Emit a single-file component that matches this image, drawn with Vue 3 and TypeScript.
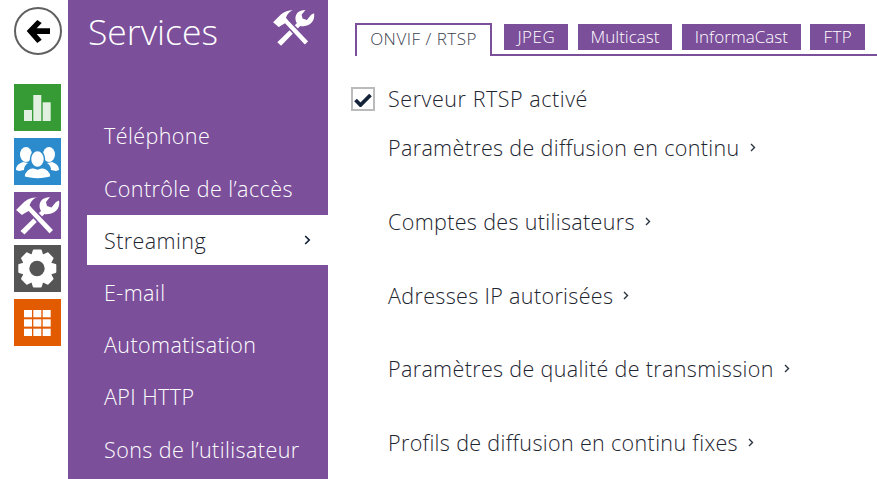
<script setup lang="ts">
const rail = [
  { key: 'stats', color: '#369a35' },
  { key: 'users', color: '#2c8bcc' },
  { key: 'tools', color: '#7c4f9b' },
  { key: 'gear', color: '#555555' },
  { key: 'grid', color: '#e25b00' }
]
const menu = ['Téléphone', 'Contrôle de l’accès', 'Streaming', 'E-mail', 'Automatisation', 'API HTTP', 'Sons de l’utilisateur']
const tabs = [
  { label: 'JPEG', caps: true },
  { label: 'Multicast', caps: false },
  { label: 'InformaCast', caps: false },
  { label: 'FTP', caps: true }
]
const links = [
  'Paramètres de diffusion en continu',
  'Comptes des utilisateurs',
  'Adresses IP autorisées',
  'Paramètres de qualité de transmission',
  'Profils de diffusion en continu fixes'
]
const wrenchPath = 'M6.5 39 L27 19 C24 14 26 8 30 6.5 C32 5.5 34 5 36 5 L32 10 L33 14 L37.5 15.5 L42 10 L45 8.5 C46 13 44 18 40.5 20 C37 22 33 22.5 30.5 22 L10.5 42.5 Z'
const hammerPath = 'M1 18 L10 9 C14 6 20 4 25 5 C20 7 17.5 10 16.5 13 L18.5 15.5 L40 38 L35.5 42.5 L14.5 20 L11 22 L8 24 Z'

// eight teeth, rounded by the stroke on the path
const gearPath = (() => {
  const pts: string[] = []
  for (let i = 0; i < 8; i++) {
    const a = (i * Math.PI) / 4
    for (const [r, off] of [[14.5, -0.34], [18.3, -0.19], [18.3, 0.19], [14.5, 0.34]]) {
      pts.push(`${(23.3 + r * Math.sin(a + off)).toFixed(1)} ${(23.5 - r * Math.cos(a + off)).toFixed(1)}`)
    }
  }
  return 'M' + pts.join(' L') + ' Z'
})()
</script>

<template>
  <div class="page">
    <div class="rail">
      <button class="back">
        <svg width="25" height="25" viewBox="0 0 25 25">
          <path d="M0.7 12 L11.3 1 L15.7 4 L10.7 9.3 H24 V15 H10.7 L15.7 20.7 L11.3 24 Z" fill="#000" />
        </svg>
      </button>
      <div class="rail-icons">
        <div v-for="r in rail" :key="r.key" class="rail-icon" :style="{ background: r.color }">
          <svg v-if="r.key === 'stats'" width="47" height="47" viewBox="0 0 47 47" fill="#fff">
            <rect x="10" y="26" width="8" height="11" opacity=".85" />
            <rect x="19.3" y="11" width="8" height="26" opacity=".85" />
            <rect x="28.7" y="18.3" width="8" height="18.7" opacity=".85" />
          </svg>
          <svg v-else-if="r.key === 'users'" width="47" height="47" viewBox="0 0 47 47" fill="#fff">
            <ellipse cx="12" cy="16.5" rx="6" ry="7.5" />
            <ellipse cx="35" cy="16.5" rx="6" ry="7.5" />
            <path d="M2 32 C2 27 6 25 9 24 L14 25 C11 27 10 29 10 32 L5 33 Z" />
            <path d="M45 32 C45 27 41 25 38 24 L33 25 C36 27 37 29 37 32 L42 33 Z" />
            <ellipse cx="23.5" cy="21" rx="7" ry="8.5" stroke="#2c8bcc" stroke-width="1.5" />
            <path d="M10 39 C10 33 15 30 19 29.5 L23.5 31 L28 29.5 C32 30 37 33 37 39 C30 41.5 17 41.5 10 39 Z" stroke="#2c8bcc" stroke-width="1.5" />
          </svg>
          <svg v-else-if="r.key === 'tools'" width="47" height="47" viewBox="0 0 47 47" fill="#fff">
            <path :d="wrenchPath" />
            <path :d="hammerPath" stroke="#7c4f9b" stroke-width="1.6" />
          </svg>
          <svg v-else-if="r.key === 'gear'" width="47" height="47" viewBox="0 0 47 47">
            <path :d="gearPath" fill="#fff" stroke="#fff" stroke-width="2" stroke-linejoin="round" />
            <circle cx="23" cy="23.5" r="7.7" fill="#555" />
          </svg>
          <svg v-else width="47" height="47" viewBox="0 0 47 47" fill="#fff">
            <template v-for="y in [11, 20.3, 29.7]" :key="y">
              <rect v-for="x in [10, 19.3, 28.7]" :key="x" :x="x" :y="y" width="8" height="7.3" />
            </template>
          </svg>
        </div>
      </div>
    </div>

    <aside class="sidebar">
      <div class="side-head">
        <span class="side-title">Services</span>
        <svg class="side-logo" width="45" height="41" viewBox="0 3 47 43" fill="#fff">
          <path :d="wrenchPath" />
          <path :d="hammerPath" stroke="#7c4f9b" stroke-width="1.6" />
        </svg>
      </div>
      <nav class="menu">
        <div v-for="m in menu" :key="m" class="menu-item" :class="{ active: m === 'Streaming' }">
          <span>{{ m }}</span>
          <svg v-if="m === 'Streaming'" width="7" height="10" viewBox="0 0 7 10">
            <path d="M1.2 1 L5.2 5 L1.2 9" fill="none" stroke="#14233a" stroke-width="1.7" />
          </svg>
        </div>
      </nav>
    </aside>

    <main class="content">
      <div class="tabs">
        <div class="tab-current">ONVIF / RTSP</div>
        <div v-for="t in tabs" :key="t.label" class="tab" :class="{ caps: t.caps }">{{ t.label }}</div>
      </div>
      <label class="check-row">
        <span class="check">
          <svg width="18" height="15" viewBox="0 0 18 15">
            <path d="M1.5 8 L6.5 13 L16.5 3" fill="none" stroke="#14233a" stroke-width="3.8" />
          </svg>
        </span>
        <span>Serveur RTSP activé</span>
      </label>
      <div class="links">
        <div v-for="l in links" :key="l" class="link">
          <span>{{ l }}</span>
          <svg width="6" height="9" viewBox="0 0 6 9">
            <path d="M1 1 L4.5 4.5 L1 8" fill="none" stroke="#2a3340" stroke-width="1.4" />
          </svg>
        </div>
      </div>
    </main>
  </div>
</template>

<style>
body {
  margin: 0;
  background: #fff;
}
</style>

<style scoped>
.page {
  display: flex;
  width: 877px;
  height: 479px;
  overflow: hidden;
  font-family: "Open Sans", "Liberation Sans", sans-serif;
  font-weight: 300;
  color: #1d2530;
}

.rail {
  width: 68px;
  flex: none;
  padding: 7px 0 0 14px;
  box-sizing: border-box;
}

.back {
  display: flex;
  align-items: center;
  justify-content: center;
  width: 48px;
  height: 48px;
  padding: 0;
  border: 2px solid #606060;
  border-radius: 50%;
  background: #fff;
  box-sizing: border-box;
}

.rail-icons {
  display: flex;
  flex-direction: column;
  gap: 6.75px;
  margin-top: 29px;
}

.rail-icon {
  width: 47px;
  height: 47px;
}

.rail-icon svg {
  display: block;
}

.sidebar {
  width: 260px;
  flex: none;
  background: #7c4f9b;
  color: #fff;
}

.side-head {
  display: flex;
  justify-content: space-between;
  height: 109.6px;
  padding: 7px 12px 0 20px;
  box-sizing: border-box;
}

.side-title {
  font-size: 35.5px;
  line-height: 48px;
}

.side-logo {
  margin-top: 1px;
}

.menu-item {
  display: flex;
  align-items: center;
  justify-content: space-between;
  height: 52.3px;
  margin-left: 19px;
  padding: 0 17px;
  font-size: 21.5px;
  letter-spacing: 0.42px;
  box-sizing: border-box;
}

.menu-item.active {
  height: 50px;
  margin: 1px 0 1px 19px;
  background: #fff;
  color: #1d2530;
}

.content {
  flex: 1;
  min-width: 0;
  padding: 23px 0 0 24px;
}

.tabs {
  display: flex;
  align-items: flex-start;
  gap: 9.4px;
  height: 33px;
  margin-left: 3px;
  border-bottom: 2px solid #7c4f9b;
  box-sizing: border-box;
}

.tab-current {
  display: flex;
  align-items: center;
  justify-content: center;
  width: 137px;
  height: 33px;
  margin-right: 3px;
  padding-bottom: 5px;
  border: 2px solid #7c4f9b;
  border-bottom: none;
  background: #fff;
  box-sizing: border-box;
  font-size: 17px;
  letter-spacing: 0.5px;
  color: #3a4250;
}

.tab {
  display: flex;
  align-items: center;
  justify-content: center;
  height: 26px;
  margin-top: 1px;
  padding: 0 13px 2px;
  background: #7c4f9b;
  color: #fff;
  font-size: 17px;
  box-sizing: border-box;
}

.tab.caps {
  letter-spacing: 0.5px;
}

.check-row {
  display: flex;
  align-items: center;
  gap: 13px;
  margin-top: 31px;
  margin-left: -1px;
  font-size: 21.5px;
  letter-spacing: 0.55px;
  line-height: 24px;
}

.check {
  display: flex;
  align-items: center;
  justify-content: center;
  width: 24px;
  height: 24px;
  border: 2px solid #bbbbbb;
  box-sizing: border-box;
}

.links {
  display: flex;
  flex-direction: column;
  gap: 50px;
  margin-top: 25px;
  margin-left: 36px;
}

.link {
  display: flex;
  align-items: center;
  gap: 10px;
  height: 23.7px;
  font-size: 21.5px;
  letter-spacing: 0.35px;
  white-space: nowrap;
}
</style>
